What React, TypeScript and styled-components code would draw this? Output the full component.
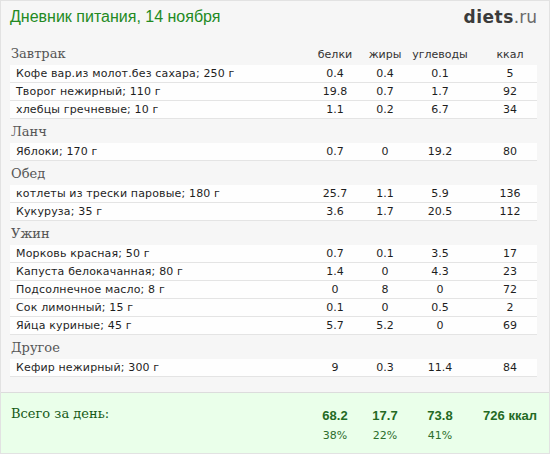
import React from "react";
import styled, { createGlobalStyle } from "styled-components";

const GlobalStyle = createGlobalStyle`
  body {
    margin: 0;
    background: #ffffff;
  }
`;

type Food = { name: string; p: string; f: string; c: string; kcal: string };
type Meal = { title: string; items: Food[] };

const meals: Meal[] = [
  {
    title: "Завтрак",
    items: [
      { name: "Кофе вар.из молот.без сахара; 250 г", p: "0.4", f: "0.4", c: "0.1", kcal: "5" },
      { name: "Творог нежирный; 110 г", p: "19.8", f: "0.7", c: "1.7", kcal: "92" },
      { name: "хлебцы гречневые; 10 г", p: "1.1", f: "0.2", c: "6.7", kcal: "34" },
    ],
  },
  {
    title: "Ланч",
    items: [{ name: "Яблоки; 170 г", p: "0.7", f: "0", c: "19.2", kcal: "80" }],
  },
  {
    title: "Обед",
    items: [
      { name: "котлеты из трески паровые; 180 г", p: "25.7", f: "1.1", c: "5.9", kcal: "136" },
      { name: "Кукуруза; 35 г", p: "3.6", f: "1.7", c: "20.5", kcal: "112" },
    ],
  },
  {
    title: "Ужин",
    items: [
      { name: "Морковь красная; 50 г", p: "0.7", f: "0.1", c: "3.5", kcal: "17" },
      { name: "Капуста белокачанная; 80 г", p: "1.4", f: "0", c: "4.3", kcal: "23" },
      { name: "Подсолнечное масло; 8 г", p: "0", f: "8", c: "0", kcal: "72" },
      { name: "Сок лимонный; 15 г", p: "0.1", f: "0", c: "0.5", kcal: "2" },
      { name: "Яйца куриные; 45 г", p: "5.7", f: "5.2", c: "0", kcal: "69" },
    ],
  },
  {
    title: "Другое",
    items: [{ name: "Кефир нежирный; 300 г", p: "9", f: "0.3", c: "11.4", kcal: "84" }],
  },
];

const columns = "1fr 50px 50px 60px 67px";

const Page = styled.div`
  width: 550px;
  height: 454px;
  box-sizing: border-box;
  border: 1px solid #e2e2e2;
  background: #f6f6f6;
  display: flex;
  flex-direction: column;
  font-family: "DejaVu Sans", Verdana, sans-serif;
`;

const Header = styled.div`
  height: 40px;
  box-sizing: border-box;
  padding: 6px 12px 0 9px;
  display: flex;
  justify-content: space-between;
  align-items: flex-start;
`;

const Title = styled.h1`
  margin: 0;
  font-family: "Liberation Sans", Arial, sans-serif;
  font-weight: normal;
  font-size: 16px;
  line-height: 20px;
  color: #238a23;
`;

const Logo = styled.div`
  font-family: "DejaVu Sans", Verdana, sans-serif;
  font-size: 17px;
  line-height: 20px;
  color: #3b3b3b;
  font-weight: bold;
  letter-spacing: 0.5px;
  span {
    font-weight: normal;
    color: #6a6a6a;
    letter-spacing: 0;
  }
`;

const Diary = styled.div`
  padding: 0 12px 0 9px;
`;

const SectionHead = styled.div`
  height: 24px;
  box-sizing: border-box;
  padding-bottom: 3px;
  display: grid;
  grid-template-columns: ${columns};
  align-items: end;
`;

const MealTitle = styled.div`
  font-family: "DejaVu Serif", Georgia, serif;
  font-size: 13px;
  line-height: 16px;
  color: #555;
  padding-left: 1px;
`;

const ColLabel = styled.div<{ $kcal?: boolean }>`
  font-size: 11px;
  line-height: 14px;
  color: #333;
  text-align: center;
  padding-left: ${(p) => (p.$kcal ? "13px" : "0")};
`;

const Row = styled.div`
  display: grid;
  grid-template-columns: ${columns};
  height: 17px;
  align-items: center;
  background: #fefefe;
  border-bottom: 1px solid #e4e4e4;
  font-size: 11px;
  color: #1e1e1e;
`;

const Name = styled.div`
  padding-left: 6px;
  white-space: nowrap;
  letter-spacing: 0.15px;
`;

const Num = styled.div<{ $kcal?: boolean }>`
  text-align: center;
  padding-left: ${(p) => (p.$kcal ? "13px" : "0")};
`;

const Footer = styled.div`
  margin-top: auto;
  height: 61px;
  box-sizing: border-box;
  border-top: 1px solid #dcdcdc;
  background: #eaffea;
  padding: 14px 12px 0 9px;
  display: grid;
  grid-template-columns: ${columns};
  grid-template-rows: 18px 18px;
  row-gap: 2px;
`;

const TotalLabel = styled.div`
  font-family: "DejaVu Serif", Georgia, serif;
  font-size: 13px;
  line-height: 14px;
  color: #175a17;
  padding-left: 1px;
`;

const Total = styled.div<{ $kcal?: boolean }>`
  font-family: "Liberation Sans", Arial, sans-serif;
  font-weight: bold;
  font-size: 13px;
  line-height: 18px;
  color: #246a24;
  text-align: center;
  padding-left: ${(p) => (p.$kcal ? "13px" : "0")};
`;

const Percent = styled.div`
  font-size: 11px;
  line-height: 18px;
  color: #2d6e2d;
  text-align: center;
`;

export default function App() {
  return (
    <Page>
      <GlobalStyle />
      <Header>
        <Title>Дневник питания, 14 ноября</Title>
        <Logo>
          diets<span>.ru</span>
        </Logo>
      </Header>
      <Diary>
        {meals.map((meal, i) => (
          <div key={meal.title}>
            <SectionHead>
              <MealTitle>{meal.title}</MealTitle>
              {i === 0 && (
                <>
                  <ColLabel>белки</ColLabel>
                  <ColLabel>жиры</ColLabel>
                  <ColLabel>углеводы</ColLabel>
                  <ColLabel $kcal>ккал</ColLabel>
                </>
              )}
            </SectionHead>
            {meal.items.map((f) => (
              <Row key={f.name}>
                <Name>{f.name}</Name>
                <Num>{f.p}</Num>
                <Num>{f.f}</Num>
                <Num>{f.c}</Num>
                <Num $kcal>{f.kcal}</Num>
              </Row>
            ))}
          </div>
        ))}
      </Diary>
      <Footer>
        <TotalLabel>Всего за день:</TotalLabel>
        <Total>68.2</Total>
        <Total>17.7</Total>
        <Total>73.8</Total>
        <Total $kcal>726 ккал</Total>
        <div />
        <Percent>38%</Percent>
        <Percent>22%</Percent>
        <Percent>41%</Percent>
      </Footer>
    </Page>
  );
}
